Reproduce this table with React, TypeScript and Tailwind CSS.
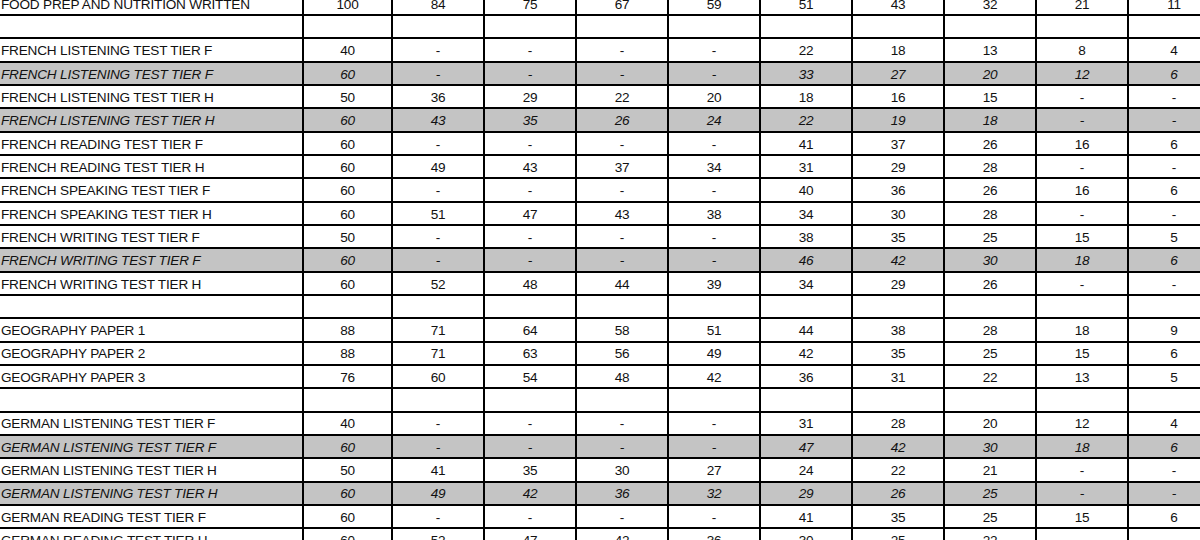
import * as React from "react";

// One row of the grade boundary table. null = blank spacer row.
type Row = { label: string; marks: string[]; italic?: boolean } | null;

const rows: Row[] = [
  { label: "FOOD PREP AND NUTRITION WRITTEN", marks: ["100", "84", "75", "67", "59", "51", "43", "32", "21", "11"] },
  null,
  { label: "FRENCH LISTENING TEST TIER F", marks: ["40", "-", "-", "-", "-", "22", "18", "13", "8", "4"] },
  { label: "FRENCH LISTENING TEST TIER F", marks: ["60", "-", "-", "-", "-", "33", "27", "20", "12", "6"], italic: true },
  { label: "FRENCH LISTENING TEST TIER H", marks: ["50", "36", "29", "22", "20", "18", "16", "15", "-", "-"] },
  { label: "FRENCH LISTENING TEST TIER H", marks: ["60", "43", "35", "26", "24", "22", "19", "18", "-", "-"], italic: true },
  { label: "FRENCH READING TEST TIER F", marks: ["60", "-", "-", "-", "-", "41", "37", "26", "16", "6"] },
  { label: "FRENCH READING TEST TIER H", marks: ["60", "49", "43", "37", "34", "31", "29", "28", "-", "-"] },
  { label: "FRENCH SPEAKING TEST TIER F", marks: ["60", "-", "-", "-", "-", "40", "36", "26", "16", "6"] },
  { label: "FRENCH SPEAKING TEST TIER H", marks: ["60", "51", "47", "43", "38", "34", "30", "28", "-", "-"] },
  { label: "FRENCH WRITING TEST TIER F", marks: ["50", "-", "-", "-", "-", "38", "35", "25", "15", "5"] },
  { label: "FRENCH WRITING TEST TIER F", marks: ["60", "-", "-", "-", "-", "46", "42", "30", "18", "6"], italic: true },
  { label: "FRENCH WRITING TEST TIER H", marks: ["60", "52", "48", "44", "39", "34", "29", "26", "-", "-"] },
  null,
  { label: "GEOGRAPHY PAPER 1", marks: ["88", "71", "64", "58", "51", "44", "38", "28", "18", "9"] },
  { label: "GEOGRAPHY PAPER 2", marks: ["88", "71", "63", "56", "49", "42", "35", "25", "15", "6"] },
  { label: "GEOGRAPHY PAPER 3", marks: ["76", "60", "54", "48", "42", "36", "31", "22", "13", "5"] },
  null,
  { label: "GERMAN LISTENING TEST TIER F", marks: ["40", "-", "-", "-", "-", "31", "28", "20", "12", "4"] },
  { label: "GERMAN LISTENING TEST TIER F", marks: ["60", "-", "-", "-", "-", "47", "42", "30", "18", "6"], italic: true },
  { label: "GERMAN LISTENING TEST TIER H", marks: ["50", "41", "35", "30", "27", "24", "22", "21", "-", "-"] },
  { label: "GERMAN LISTENING TEST TIER H", marks: ["60", "49", "42", "36", "32", "29", "26", "25", "-", "-"], italic: true },
  { label: "GERMAN READING TEST TIER F", marks: ["60", "-", "-", "-", "-", "41", "35", "25", "15", "6"] },
  { label: "GERMAN READING TEST TIER H", marks: ["60", "52", "47", "42", "36", "30", "25", "22", "-", "-"] },
];

const empty = Array.from({ length: 10 }, () => "");

export default function App() {
  return (
    <div className="h-[540px] w-[1200px] overflow-hidden bg-white font-['Liberation_Sans',Arial,sans-serif] text-[13.6px] tracking-[-0.2px] text-[#111]">
      <div className="-mt-[7.3px] w-[1240px]">
        {rows.map((row, i) => {
          const marks = row ? row.marks : empty;
          return (
            <div
              key={i}
              className={
                "grid h-[23.33px] grid-cols-[304px_89px_repeat(9,92px)] border-b-2 border-black " +
                (row?.italic ? "bg-[#c4c4c4] italic" : "bg-white")
              }
            >
              <div className="flex items-center border-r-2 border-black pt-[2px] pl-[1px] leading-none">
                {row?.label}
              </div>
              {marks.map((m, j) => (
                <div
                  key={j}
                  className="flex items-center justify-center border-r-2 border-black pt-[2px] leading-none"
                >
                  {m}
                </div>
              ))}
            </div>
          );
        })}
      </div>
    </div>
  );
}
